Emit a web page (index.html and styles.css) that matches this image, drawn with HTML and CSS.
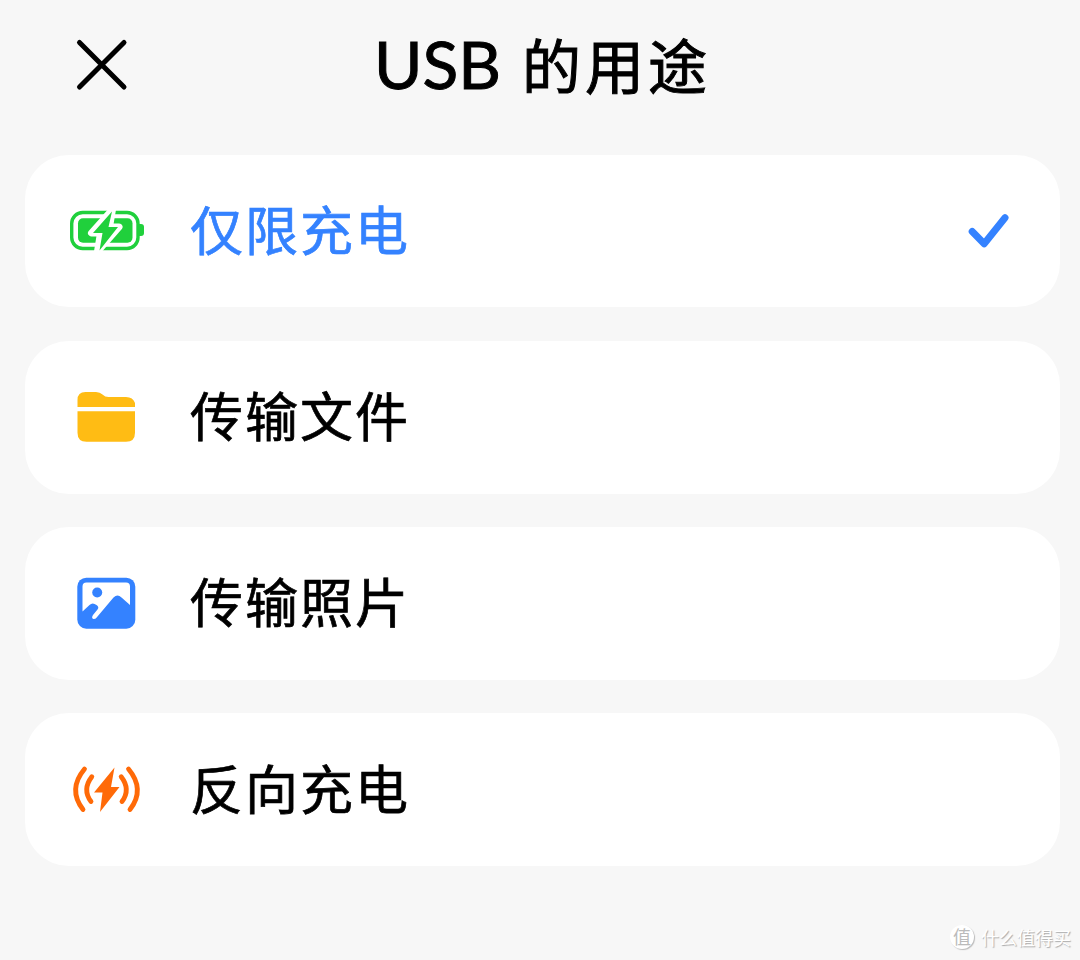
FILE: index.html
```html
<!DOCTYPE html>
<html lang="zh-CN">
<head>
<meta charset="utf-8">
<title>USB 的用途</title>
<link rel="stylesheet" href="styles.css">
</head>
<body>
<main class="sheet">
  <header class="header">
    <svg class="close" viewBox="0 0 60 60"><path d="M7.500 7.500L52 52M52 7.500L7.500 52"/></svg>
    <h1 class="title"><span class="latin">USB</span><span class="han">的用途</span></h1>
  </header>
  <ul class="options">
    <li class="option selected">
      <svg class="icon" viewBox="0 0 100 70">
        <rect x="11.700" y="16.500" width="66.300" height="36" rx="11" fill="none" stroke="#20d03c" stroke-width="3.400"/>
        <path d="M79 28h2q3 0 3 3v6q0 3-3 3h-2z" fill="#20d03c"/>
        <rect x="18" y="22.300" width="54.500" height="24.500" rx="5" fill="#20d03c"/>
        <path d="M52.500 13.500L31.500 37H40.500L37.500 55.500L59 31H49.500Z" fill="#20d03c" stroke="#fff" stroke-width="7" stroke-linejoin="round"/>
        <path d="M52 15.500L33 37H42.500L39.500 54.500L58 31H48.500Z" fill="#20d03c"/>
      </svg>
      <span class="label">仅限充电</span>
      <svg class="check" viewBox="0 0 80 60"><path d="M23.200 30.500L35.200 42.800L56 16.800"/></svg>
    </li>
    <li class="option">
      <svg class="icon" viewBox="0 0 100 70">
        <path d="M17.500 25V18q0-8 8-8H36q4 0 6.500 2.500t6 2.500H66q7 0 9 6v4zM17.500 29.300H75V50.800q0 9-9 9H26.500q-9 0-9-9z" fill="#ffbc14"/>
      </svg>
      <span class="label">传输文件</span>
    </li>
    <li class="option">
      <svg class="icon" viewBox="0 0 100 70">
        <rect x="17.300" y="9.700" width="58" height="51" rx="9" fill="#3482ff"/>
        <path d="M22.500 43.500V18.500q0-4 4-4H66q4 0 4 4V37L61.500 29.500q-4-4-8 0L37.500 48.500q-2 3-4 2.500q-2.500-1-.5-4L37.500 41.500q2-2.500-1-4.500q-4-3-7 0z" fill="#fff"/>
        <circle cx="37.200" cy="24.500" r="5" fill="#3482ff"/>
      </svg>
      <span class="label">传输照片</span>
    </li>
    <li class="option">
      <svg class="icon" viewBox="0 0 100 70">
        <path d="M54.500 12.500L34 37.500H42.500L40 57L59.500 32H51Z" fill="#ff6a08"/>
        <path d="M24.500 14Q7.500 34.500 23 54.500M31.800 21.700Q22 34.500 31 46.500M61.200 21.700Q71 34.500 62 46.500M68.500 14Q85.500 34.500 70 54.500" fill="none" stroke="#ff6a08" stroke-width="4.800" stroke-linecap="round"/>
      </svg>
      <span class="label">反向充电</span>
    </li>
  </ul>
  <footer class="watermark"><span class="badge">值</span><span>什么值得买</span></footer>
</main>
</body>
</html>
```
FILE: styles.css
```css
* { box-sizing: border-box; }
body {
  margin: 0;
  background: #f7f7f7;
  color: #000;
  font-family: "Noto Sans CJK SC", sans-serif;
}
.sheet {
  width: 1080px;
  height: 960px;
  overflow: hidden;
  display: flex;
  flex-direction: column;
}
.header {
  height: 154.500px;
  flex: none;
  display: flex;
  align-items: flex-start;
  padding: 35px 0 0 72px;
}
.close {
  width: 60px;
  height: 60px;
  fill: none;
  stroke: #000;
  stroke-width: 5;
  stroke-linecap: round;
}
.title {
  margin: -15px 0 0 242px;
  display: flex;
  align-items: baseline;
  font-size: 59px;
  line-height: 88px;
  font-weight: 400;
  -webkit-text-stroke: 1px currentColor;
  white-space: nowrap;
}
.latin {
  font-family: Lato, sans-serif;
  font-size: 66px;
  width: 148px;
}
.han { letter-spacing: 4px; }
.options {
  list-style: none;
  margin: 0 20px 0 25px;
  padding: 0;
  display: flex;
  flex-direction: column;
  gap: 33.500px;
}
.option {
  height: 152.800px;
  border-radius: 44px;
  background: #fff;
  display: flex;
  align-items: center;
  padding: 0 31px 0 35px;
}
.icon { width: 100px; height: 70px; flex: none; }
.label {
  margin: -6px 0 0 30px;
  flex: 1;
  font-size: 53px;
  line-height: 80px;
  letter-spacing: 2px;
  -webkit-text-stroke: .7px currentColor;
}
.selected .label { color: #3482ff; }
.check {
  width: 80px;
  height: 60px;
  fill: none;
  stroke: #3482ff;
  stroke-width: 7;
  stroke-linecap: round;
  stroke-linejoin: round;
}
.watermark {
  margin: auto 9px 10px auto;
  display: flex;
  align-items: center;
  gap: 7px;
  font-size: 18px;
  line-height: 26px;
  color: #fff;
  text-shadow: 1px 1px 1px #aaa;
}
.badge {
  width: 24px;
  height: 24px;
  border-radius: 50%;
  background: #fff;
  box-shadow: 1px 1px 1px #bbb;
  color: #bbb;
  text-shadow: none;
  text-align: center;
  line-height: 23px;
}
```
